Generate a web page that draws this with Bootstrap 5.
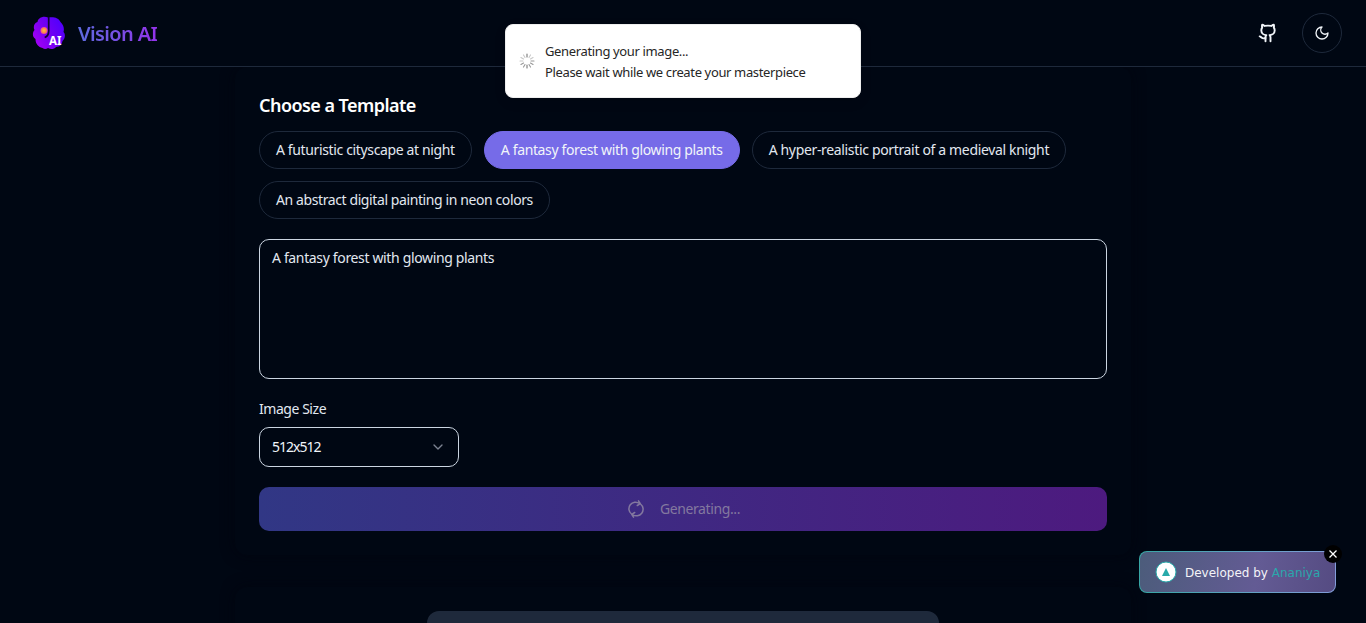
<!DOCTYPE html>
<html lang="en" data-bs-theme="dark">
<head>
<meta charset="utf-8">
<meta name="viewport" content="width=device-width, initial-scale=1">
<title>Vision AI</title>
<link href="https://cdn.jsdelivr.net/npm/bootstrap@5.3.0/dist/css/bootstrap.min.css" rel="stylesheet">
<style>
html,body{height:100%;overflow:hidden}
body{background:#000713;color:#f1f5f9;font-family:"Noto Sans",sans-serif;font-size:14px;line-height:20px;letter-spacing:-.36px}
main{height:556px;overflow:hidden}
.topbar{height:67px;border-bottom:1px solid #1e293b;padding:0 24px 0 32px}
.brand-name{font-size:20px;line-height:28px;font-weight:600;letter-spacing:-.62px;padding-top:2px;background:linear-gradient(90deg,#5d6ce0,#9333ea);-webkit-background-clip:text;background-clip:text;color:transparent}
.theme-btn{width:40px;height:40px;border:1px solid #1e293b;color:#f1f5f9}
.panel{width:896px;padding:24px;border-radius:12px;box-shadow:0 0 14px #00050f}
.title{font-size:18px;line-height:28px;font-weight:600;letter-spacing:-.54px;margin:0 0 12px}
.chips{gap:12px;margin-bottom:20px}
.chip{height:38px;padding:0 16px;border:1px solid #1e293b;border-radius:19px;font-size:14px;line-height:20px;letter-spacing:-.34px;color:#e2e8f0}
.chip.selected{background:#766be8;border-color:#766be8;color:#f1f5f9;letter-spacing:-.36px}
.chip:first-child{letter-spacing:-.36px}
.chip:last-child{letter-spacing:-.4px}
.prompt{height:140px;border:1px solid #cbd5e1;border-radius:10px;padding:8px 12px;background:transparent;color:#e2e8f0;font-size:14px;line-height:20px;letter-spacing:-.35px;resize:none;display:block}
.size-label{margin:20px 0 8px;letter-spacing:-.45px;color:#e2e8f0}
.size-select{width:200px;height:40px;border:1px solid #cbd5e1;border-radius:10px;padding:0 12px;color:#f1f5f9;font-size:14px}
.size-select span{letter-spacing:-1px}
.generate{height:44px;margin-top:20px;gap:14px;border-radius:10px;background:linear-gradient(90deg,#313785,#4d1a7f);color:#83789f;border:0;font-size:14px;letter-spacing:-.38px}
.second{margin-top:32px}
.preview{width:512px;height:512px;background:#1e293b;border-radius:12px}
.notice{top:24px;left:505px;width:356px;height:74px;background:#fff;border:1px solid #eee;border-radius:8px;color:#262626;font-size:13px;line-height:21px;padding:2px 13px 0;gap:10px;box-shadow:0 4px 12px #0000001a;z-index:5}
.notice svg{margin-top:-2px}
.credit{right:30px;bottom:30px;width:197px;height:42px;padding:1px;border-radius:8px;background:linear-gradient(90deg,#37a6a5,#839cd9)}
.credit-body{background:linear-gradient(100deg,#4c5c7b,#635b94 60%,#554b82);border-radius:7px;font:12px/20px "DejaVu Sans",sans-serif;letter-spacing:0;padding-left:15px;color:#f4f4f8}
.credit-body span{padding-top:1px}
.credit-body b{font-weight:400;color:#2aa7ac}
.dismiss{right:-6px;top:-6px;width:18px;height:18px;background:#000;border:0;color:#fff}
</style>
</head>
<body>
<header class="topbar d-flex align-items-center justify-content-between">
  <div class="d-flex align-items-center brand">
    <svg width="34" height="34" viewBox="0 0 34 34" class="me-2">
      <defs><linearGradient id="lobe" x1="0" y1=".8" x2="1" y2=".2"><stop stop-color="#a600f5"/><stop offset=".5" stop-color="#7300f2"/><stop offset="1" stop-color="#4c00ff"/></linearGradient><radialGradient id="spark"><stop stop-color="#ffc03a"/><stop offset=".6" stop-color="#ff8b48"/><stop offset="1" stop-color="#e74b99"/></radialGradient></defs>
      <path fill="url(#lobe)" d="M16 1.500C11-.5 6 2 5.500 6 2 7 1 11 2.500 14c-2.500 3-2 7 1 9 0 5 3 8 7 9 2 1.500 4 1 5.500 0 2.500 1.500 6 1.500 8-1 4 0 6-3 6.500-6 3-3 3-7 1-9 1-4 0-7-3-10C27 1.500 21 .5 16 1.500z"/>
      <path fill="none" stroke="#10052d" stroke-width="1.700" d="M16.700 1v14q0 5-4 6.500"/>
      <circle cx="12" cy="14.500" r="3.500" fill="url(#spark)"/>
      <text x="17" y="28.500" fill="#fff" font-family="Noto Sans" font-weight="700" font-size="11.500" letter-spacing="0">AI</text>
    </svg>
    <span class="brand-name ms-1">Vision AI</span>
  </div>
  <div class="d-flex align-items-center gap-4">
    <svg width="20" height="20" viewBox="0 0 24 24" fill="none" stroke="currentColor" stroke-width="2.300" stroke-linecap="round" stroke-linejoin="round"><path d="M15 22v-4a4.800 4.800 0 0 0-1-3.500c3 0 6-2 6-5.500.08-1.250-.27-2.480-1-3.500.28-1.150.28-2.350 0-3.500 0 0-1 0-3 1.500-2.640-.5-5.360-.5-8 0C6 2 5 2 5 2c-.3 1.150-.3 2.350 0 3.500A5.403 5.403 0 0 0 4 9c0 3.500 3 5.500 6 5.500-.39.49-.68 1.050-.85 1.650-.17.600-.22 1.230-.15 1.850v4"/><path d="M9 18c-4.510 2-5-2-7-2"/></svg>
    <button class="theme-btn btn rounded-circle p-0 d-flex align-items-center justify-content-center" aria-label="Theme"><svg width="16" height="16" viewBox="0 0 24 24" fill="none" stroke="currentColor" stroke-width="2" stroke-linecap="round" stroke-linejoin="round"><path d="M12 3a6 6 0 0 0 9 9 9 9 0 1 1-9-9Z"/></svg></button>
  </div>
</header>
<main class="d-flex flex-column align-items-center">
  <section class="panel">
    <h2 class="title">Choose a Template</h2>
    <div class="d-flex flex-wrap chips">
      <button class="chip btn">A futuristic cityscape at night</button>
      <button class="chip btn selected">A fantasy forest with glowing plants</button>
      <button class="chip btn">A hyper-realistic portrait of a medieval knight</button>
      <button class="chip btn">An abstract digital painting in neon colors</button>
    </div>
    <textarea class="prompt w-100">A fantasy forest with glowing plants</textarea>
    <label class="d-block size-label">Image Size</label>
    <div class="size-select d-flex align-items-center justify-content-between"><span>512x512</span><svg width="16" height="16" viewBox="0 0 24 24" fill="none" stroke="#7c8391" stroke-width="2" stroke-linecap="round" stroke-linejoin="round"><path d="m6 9 6 6 6-6"/></svg></div>
    <button class="generate w-100 d-flex align-items-center justify-content-center"><svg width="20" height="20" viewBox="0 0 20 20" fill="none" stroke="currentColor" stroke-width="1.500" stroke-linecap="round" stroke-linejoin="round"><path d="M5.500 15A6.500 6.500 0 0 1 13.500 4.500M14.500 5A6.500 6.500 0 0 1 6.500 15.500M12.500 1.800l1.800 2.900-3 1.800M7.500 18.200l-1.800-2.900 3-1.800"/></svg><span>Generating...</span></button>
  </section>
  <section class="panel second d-flex justify-content-center"><div class="preview flex-shrink-0"></div></section>
</main>
<aside class="notice position-absolute d-flex align-items-center">
  <svg width="16" height="16" viewBox="-8 -8 16 16" stroke="#777" stroke-width="1.100" stroke-linecap="round"><path d="M0 4v3M0-4v-3"/><path opacity=".75" d="M-2 3.460l-1.500 2.600M-3.460 2l-2.600 1.500"/><path opacity=".4" d="M-4 0h-3M-3.460-2l-2.600-1.500M-2-3.460l-1.500-2.600M2-3.460l1.500-2.600M3.460-2l2.600-1.500"/><path opacity=".75" d="M4 0h3M3.460 2l2.600 1.500M2 3.460l1.500 2.600"/></svg>
  <div><div>Generating your image...</div><div>Please wait while we create your masterpiece</div></div>
</aside>
<aside class="credit position-absolute">
  <div class="credit-body h-100 d-flex align-items-center"><svg width="22" height="22" viewBox="0 0 22 22" class="me-2"><circle cx="11" cy="11" r="10" fill="#fff" stroke="#27aaaa"/><path d="m11 7 4 8H7z" fill="#27aaaa"/></svg><span>Developed by <b>Ananiya</b></span></div>
  <button class="dismiss position-absolute rounded-circle p-0 d-flex align-items-center justify-content-center" aria-label="Close"><svg width="10" height="10" viewBox="0 0 10 10" stroke="#fff" stroke-width="1.300"><path d="m1.500 1.500 7 7m0-7-7 7"/></svg></button>
</aside>
</body>
</html>
